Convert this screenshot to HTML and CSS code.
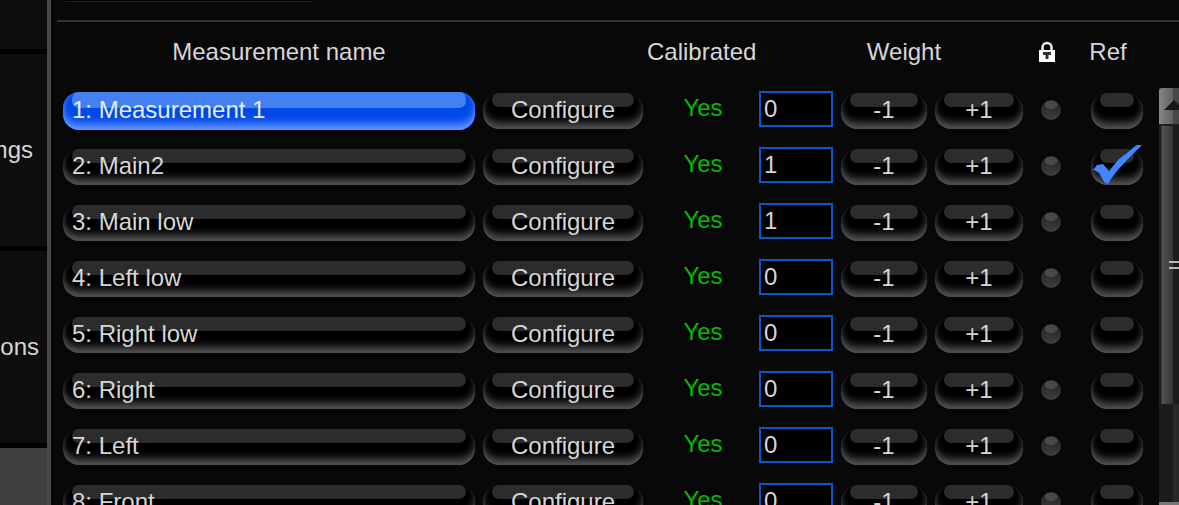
FILE: index.html
```html
<!DOCTYPE html>
<html lang="en">
<head>
<meta charset="utf-8">
<title>Measurements</title>
<link rel="stylesheet" href="styles.css">
</head>
<body>
<div class="app">
  <nav class="sidebar">
    <div class="side-item side-first"></div>
    <button class="side-item side-near">ngs</button>
    <button class="side-item">ons</button>
  </nav>
  <main class="panel">
    <div class="toolbar"><div class="toolbar-pill"></div></div>
    <div class="content">
      <table class="list">
        <colgroup>
          <col><col class="c-config"><col class="c-cal"><col class="c-value"><col class="c-minus"><col class="c-plus"><col class="c-lock"><col class="c-ref">
        </colgroup>
        <thead>
          <tr>
            <th class="h-name">Measurement name</th>
            <th></th>
            <th>Calibrated</th>
            <th class="h-weight" colspan="3">Weight</th>
            <th class="h-lock"><svg class="lock" viewBox="0 0 18 22" role="img" aria-label="Locked"><path d="M4.500 11V6.500a4.500 4.500 0 0 1 9 0V11" fill="none" stroke="#eee" stroke-width="2.500"/><path d="M1 9h16v12H1z" fill="#fff"/><path d="M5 11h8v3h-2.500v4h-3v-4H5z" fill="#333"/></svg></th>
            <th class="h-ref">Ref</th>
          </tr>
        </thead>
        <tbody id="rows"></tbody>
      </table>
      <div class="scrollbar">
        <button class="scroll-up" aria-label="Scroll up"><svg class="arrow" viewBox="0 0 20 10"><path d="M0 10L10 0l10 10z" fill="#171717"/></svg></button>
        <div class="thumb"><div class="grip"></div></div>
        <div class="track"></div>
        <div class="scroll-down"></div>
      </div>
    </div>
  </main>
</div>
<script src="rows.js"></script>
</body>
</html>
```
FILE: styles.css
```css
* { box-sizing: border-box; }
body {
  margin: 0;
  background: #080808;
  color: #d6d6d6;
  font: 24px/28px "Liberation Sans", Arial, sans-serif;
}
button, input { font: inherit; color: inherit; margin: 0; }
button { border: 0; cursor: pointer; }
.app { display: flex; height: 100vh; overflow: hidden; }
.sidebar {
  flex: none;
  width: 51px;
  display: flex;
  flex-direction: column;
  background: #404040;
  border-right: 4px solid #484848;
  overflow: hidden;
}
.side-item {
  flex: none;
  height: 197px;
  display: flex;
  align-items: center;
  justify-content: flex-end;
  padding: 0 8px 0 0;
  background: #0e0e0e;
  border-bottom: 5px solid #000;
}
.side-first { height: 54px; }
.side-near { padding-right: 14px; }
.panel { flex: 1; min-width: 0; padding-left: 6px; overflow: hidden; }
.toolbar { height: 22px; border-bottom: 2px solid #333; padding-left: 8px; }
.toolbar-pill { width: 248px; height: 2px; background: #000; border-bottom: 1px solid #222; border-radius: 0 0 16px 16px; }
.content { display: flex; align-items: flex-start; padding-left: 2px; }
.list { flex: 1; min-width: 0; width: 100%; table-layout: fixed; border-collapse: collapse; }
.c-config { width: 168px; }
.c-cal { width: 108px; }
.c-value { width: 82px; }
.c-minus { width: 94px; }
.c-plus { width: 96px; }
.c-lock { width: 48px; }
.c-ref { width: 84px; }
th { height: 60px; padding: 0; font-weight: 400; text-align: center; white-space: nowrap; }
.h-name { padding-left: 20px; }
.h-weight { padding-left: 26px; }
.h-lock { padding-right: 8px; }
.h-ref { padding-right: 18px; }
.lock { display: block; width: 18px; height: 22px; margin: 0 auto; }
td { height: 56px; padding: 2px 4px 0; vertical-align: middle; text-align: center; }
td.yes { color: #00bd00; padding: 0 4px 4px 8px; }
td.lock-cell { padding-top: 0; }
.glossy {
  position: relative;
  display: block;
  width: 100%;
  height: 36px;
  padding: 0 0 2px;
  border-radius: 16px;
  background: #000;
  box-shadow: inset 0 -8px 9px -2px #545454, inset 0 -1px 4px #303030;
  white-space: nowrap;
}
.glossy::before {
  content: "";
  position: absolute;
  inset: 0 9px auto;
  height: 14px;
  border-radius: 7px;
  background: #2c2c2c;
}
.label { position: relative; display: block; }
.name { text-align: left; padding-left: 9px; }
.selected { height: 38px; background: #0048e8; box-shadow: inset 0 -8px 9px -2px #6496ff, inset 0 0 4px #3478ff; color: #e4ecff; }
.selected::before { height: 16px; background: #4580f0; }
.value {
  display: block;
  width: 74px;
  height: 36px;
  margin-bottom: 4px;
  padding: 0 0 0 3px;
  background: #000;
  border: 2px solid #0858cc;
  border-radius: 0;
  outline: 0;
}
.dot {
  appearance: none;
  display: block;
  width: 20px;
  height: 20px;
  margin: 0 auto;
  border-radius: 50%;
  background: radial-gradient(ellipse 7px 5px at 50% 24%, #484848 80%, transparent), linear-gradient(#1c1c1c, #404040);
}
.ref { width: 52px; margin: 0 auto; }
.check { position: absolute; left: 0; top: -4px; width: 52px; height: 40px; }
.scrollbar { flex: none; width: 20px; height: 100vh; padding-top: 66px; }
.scroll-up {
  display: flex;
  width: 20px;
  height: 38px;
  padding: 12px 0 0 5px;
  background: linear-gradient(90deg, #868686, #606060 70%, #484848 70%);
  border-bottom: 2px solid #202020;
  border-radius: 3px 0 0 0;
  overflow: hidden;
}
.arrow { flex: none; width: 20px; height: 10px; }
.thumb {
  height: 278px;
  display: flex;
  align-items: center;
  justify-content: flex-end;
  background: linear-gradient(90deg, #202020 2px, #555 3px, #343434 14px, #1a1a1a 14px);
}
.grip { width: 10px; height: 8px; border: solid #b8b8b8; border-width: 2px 0; }
.track { height: 98px; background: linear-gradient(90deg, #1c1c1c 14px, #292929 14px); }
.scroll-down { height: 38px; background: #777; }
```
FILE: rows.js
```js
const rows = [
  ["Measurement 1", 0], ["Main2", 1], ["Main low", 1], ["Left low", 0],
  ["Right low", 0], ["Right", 0], ["Left", 0], ["Front", 0]
];
const check = '<svg class="check" viewBox="0 0 52 40"><path d="M0 25l3-1 3-4 6-1 6 7 5-6 5-6 8-6 7-6 6-4 3-1v2l-8 8-9 9-9 10-6 8-3 5-3-1-6-10-5-3z" fill="#4285ff"/></svg>';

document.getElementById("rows").innerHTML = rows.map(([name, weight], i) => `
  <tr>
    <td><button class="glossy name${i === 0 ? " selected" : ""}"><span class="label">${i + 1}: ${name}</span></button></td>
    <td><button class="glossy"><span class="label">Configure</span></button></td>
    <td class="yes">Yes</td>
    <td><input class="value" aria-label="Weight of ${name}" value="${weight}"></td>
    <td><button class="glossy"><span class="label">-1</span></button></td>
    <td><button class="glossy"><span class="label">+1</span></button></td>
    <td class="lock-cell"><input class="dot" type="checkbox" aria-label="Lock ${name}"></td>
    <td><button class="glossy ref" aria-label="Use ${name} as reference" aria-pressed="${i === 1}">${i === 1 ? check : ""}</button></td>
  </tr>`).join("");
```
